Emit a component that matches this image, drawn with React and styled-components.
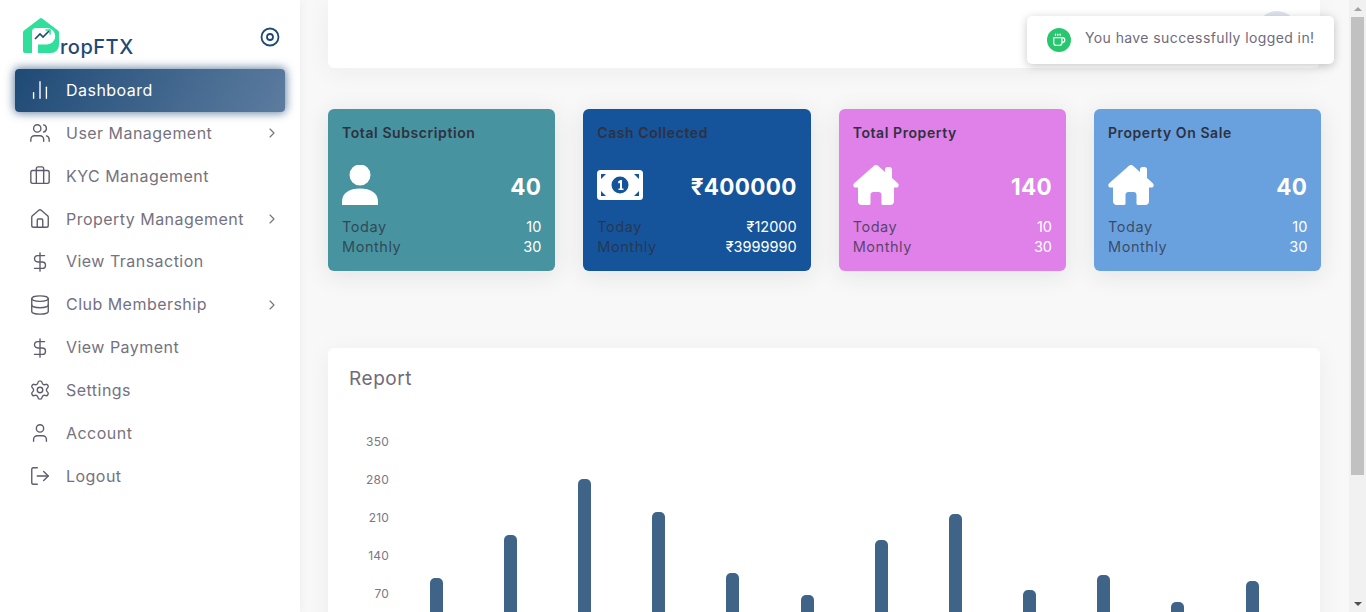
import React from 'react';
import styled, { createGlobalStyle } from 'styled-components';
import {
  ChartNoAxesColumn, Users, Briefcase, House, DollarSign, Database,
  Settings, User, LogOut, ChevronRight, Coffee,
} from 'lucide-react';

const GlobalStyle = createGlobalStyle`
  html, body { margin: 0; height: 100%; overflow: hidden; }
  body { font-family: Inter, "Open Sans", "Liberation Sans", sans-serif; background: #f8f8f8; }
`;

const Shell = styled.div`
  display: flex;
  height: 612px;
  overflow: hidden;
`;

const Sidebar = styled.aside`
  width: 300px;
  flex: none;
  background: #fff;
  box-shadow: 0 0 10px rgba(0, 0, 0, 0.06);
  padding: 0 15px;
  box-sizing: border-box;
  z-index: 2;
`;

const Brand = styled.div`
  height: 69px;
  display: flex;
  justify-content: space-between;
  padding: 18px 5px 0 8px;
  box-sizing: border-box;
`;

const LogoWrap = styled.div`
  display: flex;
  align-items: flex-end;
  height: 35px;
  color: #1f4a76;
  font-size: 20px;
  font-weight: 500;
  letter-spacing: 0.5px;
`;

const LogoText = styled.span`
  margin-left: 1px;
  line-height: 22px;
  margin-bottom: -5px;
`;

const Toggle = styled.svg`
  width: 20px;
  height: 20px;
  margin-top: 9px;
`;

const Menu = styled.nav`
  display: flex;
  flex-direction: column;
`;

const Item = styled.div`
  height: 42.86px;
  display: flex;
  align-items: center;
  padding: 0 5px 0 14px;
  border-radius: 4px;
  font-size: 16px;
  letter-spacing: 0.47px;
  color: ${p => (p.$active ? '#fff' : '#75727f')};
  background: ${p => (p.$active ? 'linear-gradient(118deg, #1f4a76, #5c7c9f)' : 'transparent')};
  box-shadow: ${p => (p.$active ? '0 0 10px 1px rgba(31, 74, 118, 0.7)' : 'none')};
  font-weight: 400;
`;

const ItemIcon = styled.span`
  width: 22px;
  height: 22px;
  display: flex;
  margin-right: 15px;
  color: ${p => (p.$active ? '#fff' : '#5e5b6b')};
`;

const ItemLabel = styled.span`
  flex: 1;
  margin-bottom: 1px;
`;

const Main = styled.main`
  flex: 1;
  min-width: 0;
  padding: 0 28px;
  position: relative;
`;

const TopBar = styled.header`
  height: 68px;
  width: 992px;
  background: #fff;
  border-radius: 0 0 6px 6px;
  box-shadow: 0 4px 24px rgba(34, 41, 47, 0.05);
  display: flex;
  justify-content: flex-end;
  align-items: flex-start;
  padding: 11px 23px 0 0;
  box-sizing: border-box;
`;

const Avatar = styled.div`
  width: 40px;
  height: 40px;
  border-radius: 50%;
  background: #dfe4ee;
`;

const Toast = styled.div`
  position: absolute;
  left: 727px;
  top: 16px;
  width: 307px;
  height: 48px;
  box-sizing: border-box;
  background: #fff;
  border-radius: 5px;
  box-shadow: 0 2px 10px rgba(0, 0, 0, 0.22);
  display: flex;
  align-items: center;
  padding: 0 20px;
  color: #6e6b7b;
  font-size: 14px;
  letter-spacing: 0.4px;
  white-space: nowrap;
`;

const ToastIcon = styled.span`
  width: 24px;
  height: 24px;
  border-radius: 50%;
  background: #28c76f;
  color: #fff;
  display: flex;
  align-items: center;
  justify-content: center;
  margin-right: 14px;
  flex: none;
`;

const ToastText = styled.span`
  margin-bottom: 6px;
`;

const Cards = styled.section`
  display: grid;
  grid-template-columns: repeat(4, 227.33px);
  column-gap: 28px;
  margin-top: 41px;
`;

const Card = styled.article`
  height: 162px;
  box-sizing: border-box;
  padding: 15px 14px 0;
  border-radius: 6px;
  background: ${p => p.$bg};
  color: #fff;
  box-shadow: 0 4px 24px rgba(34, 41, 47, 0.1);
`;

const CardTitle = styled.h4`
  margin: 0;
  height: 18px;
  line-height: 18px;
  font-size: 14px;
  font-weight: 600;
  letter-spacing: 0.58px;
  color: #2f3140;
`;

const CardMiddle = styled.div`
  height: 40px;
  margin-top: 23px;
  display: flex;
  justify-content: space-between;
  align-items: center;
`;

const CardValue = styled.span`
  font-size: 22.5px;
  font-weight: 700;
  letter-spacing: 0.3px;
  margin-top: 2px;
`;

const CardStats = styled.div`
  margin-top: 12px;
  font-size: 14.5px;
  line-height: 20px;
`;

const StatRow = styled.div`
  display: flex;
  justify-content: space-between;
  color: #fff;
  span:first-child {
    color: rgba(43, 46, 60, 0.75);
    letter-spacing: 0.55px;
  }
`;

const Report = styled.section`
  margin-top: 77px;
  height: 400px;
  background: #fff;
  border-radius: 6px;
  box-shadow: 0 4px 24px rgba(34, 41, 47, 0.05);
  padding: 21px;
  box-sizing: border-box;
  width: 992px;
`;

const ReportTitle = styled.h4`
  margin: 0;
  font-size: 19px;
  line-height: 20px;
  font-weight: 400;
  letter-spacing: 0.55px;
  color: #6e6b7b;
`;

const ChartBox = styled.svg`
  display: block;
  margin: 0 0 0 -21px;
  width: 992px;
  height: 223px;
  font-family: Inter, sans-serif;
`;

const Scrollbar = styled.div`
  width: 17px;
  flex: none;
  background: #f1f1f1;
  display: flex;
  flex-direction: column;
  align-items: center;
`;

const ScrollArrow = styled.div`
  height: 17px;
  width: 100%;
  flex: none;
  display: flex;
  align-items: center;
  justify-content: center;
  margin-top: ${p => (p.$down ? 'auto' : '0')};
  &::before {
    content: '';
    border-left: 4px solid transparent;
    border-right: 4px solid transparent;
    border-top: ${p => (p.$down ? '4px solid #505050' : 'none')};
    border-bottom: ${p => (p.$down ? 'none' : '4px solid #a3a3a3')};
  }
`;

const ScrollThumb = styled.div`
  width: 13px;
  height: 458px;
  background: #c1c1c1;
`;

const menu = [
  { label: 'Dashboard', Icon: ChartNoAxesColumn, active: true },
  { label: 'User Management', Icon: Users, more: true },
  { label: 'KYC Management', Icon: Briefcase },
  { label: 'Property Management', Icon: House, more: true },
  { label: 'View Transaction', Icon: DollarSign },
  { label: 'Club Membership', Icon: Database, more: true },
  { label: 'View Payment', Icon: DollarSign },
  { label: 'Settings', Icon: Settings },
  { label: 'Account', Icon: User },
  { label: 'Logout', Icon: LogOut },
];

const PersonIcon = () => (
  <svg width="40" height="40" viewBox="0 0 40 40" fill="#fff">
    <circle cx="18" cy="10" r="10.5" />
    <path d="M0 40v-3c0-9 7-13.500 18-13.500S36 28 36 37v3z" />
  </svg>
);

const MoneyIcon = () => (
  <svg width="46" height="30" viewBox="0 0 46 30">
    <rect width="46" height="30" rx="3.500" fill="#fff" />
    <circle cx="23" cy="15" r="8.500" fill="#15549a" />
    <path d="M21 11.500l2.500-1.500h1.500v8.500h1.500v1.500h-5v-1.500h1.500v-5.500l-1.500.5z" fill="#fff" />
    <path d="M4 4h5l-5 5zM42 4h-5l5 5zM4 26h5l-5-5zM42 26h-5l5-5z" fill="#15549a" />
  </svg>
);

const HouseIcon = () => (
  <svg width="46" height="40" viewBox="0 0 46 40" fill="#fff">
    <path d="M21 .8a3 3 0 0 1 4 0l7 6.200V4.500A2.500 2.500 0 0 1 34.500 2h2A2.500 2.500 0 0 1 39 4.500V13l5.800 5.200c1.800 1.700.7 4.300-1.600 4.300H41V36a4 4 0 0 1-4 4h-7a1.500 1.500 0 0 1-1.500-1.500V30a3 3 0 0 0-3-3h-5a3 3 0 0 0-3 3v8.500A1.500 1.500 0 0 1 16 40H9a4 4 0 0 1-4-4V22.500H2.800c-2.300 0-3.400-2.600-1.600-4.300z" />
  </svg>
);

const cards = [
  { title: 'Total Subscription', bg: '#4793a0', value: '40', today: '10', monthly: '30', icon: <PersonIcon /> },
  { title: 'Cash Collected', bg: '#15549a', value: '₹400000', today: '₹12000', monthly: '₹3999990', icon: <MoneyIcon /> },
  { title: 'Total Property', bg: '#e081e9', value: '140', today: '10', monthly: '30', icon: <HouseIcon /> },
  { title: 'Property On Sale', bg: '#69a1de', value: '40', today: '10', monthly: '30', icon: <HouseIcon /> },
];

const ticks = [
  { label: '350', y: 442 },
  { label: '280', y: 480 },
  { label: '210', y: 518 },
  { label: '140', y: 556 },
  { label: '70', y: 594 },
];

const bars = [
  { x: 430, top: 578 }, { x: 504, top: 535 }, { x: 578, top: 479 }, { x: 652, top: 512 },
  { x: 726, top: 573 }, { x: 801, top: 595 }, { x: 875, top: 540 }, { x: 949, top: 514 },
  { x: 1023, top: 590 }, { x: 1097, top: 575 }, { x: 1171, top: 602 }, { x: 1246, top: 581 },
];

// chart svg starts at page x 328, y 389
const Chart = () => (
  <ChartBox viewBox="328 389 992 223">
    {ticks.map(t => (
      <text key={t.label} x="389" y={t.y + 4} textAnchor="end" fontSize="12" letterSpacing="0.2" fill="#7a7786">{t.label}</text>
    ))}
    {bars.map(b => (
      <path
        key={b.x}
        d={`M${b.x} 620V${b.top + 5}a5 5 0 0 1 5-5h3a5 5 0 0 1 5 5V620z`}
        fill="#3f6488"
      />
    ))}
  </ChartBox>
);

const Logo = () => (
  <svg width="36" height="35" viewBox="0 0 36 35">
    <path
      d="M16.500.7a2.400 2.400 0 0 1 3 0L35 12.500a3 3 0 0 1 1 2.200V27a8 8 0 0 1-8 8H2a2 2 0 0 1-2-2V14.700a3 3 0 0 1 1-2.200z"
      fill="#31df9c"
    />
    <path d="M9 35V14a4 4 0 0 1 4-4h11a8.250 8.250 0 0 1 0 16.500h-9V35z" fill="#fff" />
    <path d="M12 21l5-5 3 3 7-7" fill="none" stroke="#1f4a76" strokeWidth="1.600" />
    <path d="M22.500 12H27v4.500" fill="none" stroke="#31df9c" strokeWidth="1.600" />
  </svg>
);

export default function App() {
  return (
    <Shell>
      <GlobalStyle />
      <Sidebar>
        <Brand>
          <LogoWrap>
            <Logo />
            <LogoText>ropFTX</LogoText>
          </LogoWrap>
          <Toggle viewBox="0 0 20 20" fill="none" stroke="#1f4a76" strokeWidth="1.800">
            <circle cx="10" cy="10" r="8.500" />
            <circle cx="10" cy="10" r="3" />
          </Toggle>
        </Brand>
        <Menu>
          {menu.map(({ label, Icon, active, more }) => (
            <Item key={label} $active={active}>
              <ItemIcon $active={active}><Icon size={22} strokeWidth={1.5} /></ItemIcon>
              <ItemLabel>{label}</ItemLabel>
              {more && <ChevronRight size={16} strokeWidth={1.7} />}
            </Item>
          ))}
        </Menu>
      </Sidebar>
      <Main>
        <TopBar><Avatar /></TopBar>
        <Toast>
          <ToastIcon><Coffee size={14} strokeWidth={2} /></ToastIcon>
          <ToastText>You have successfully logged in!</ToastText>
        </Toast>
        <Cards>
          {cards.map(c => (
            <Card key={c.title} $bg={c.bg}>
              <CardTitle>{c.title}</CardTitle>
              <CardMiddle>
                {c.icon}
                <CardValue>{c.value}</CardValue>
              </CardMiddle>
              <CardStats>
                <StatRow><span>Today</span><span>{c.today}</span></StatRow>
                <StatRow><span>Monthly</span><span>{c.monthly}</span></StatRow>
              </CardStats>
            </Card>
          ))}
        </Cards>
        <Report>
          <ReportTitle>Report</ReportTitle>
          <Chart />
        </Report>
      </Main>
      <Scrollbar>
        <ScrollArrow />
        <ScrollThumb />
        <ScrollArrow $down />
      </Scrollbar>
    </Shell>
  );
}
